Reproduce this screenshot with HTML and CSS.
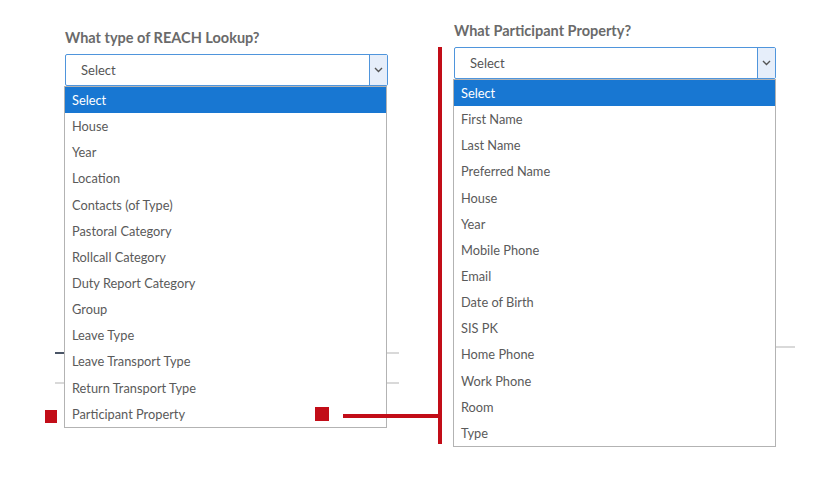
FILE: index.html
```html
<!DOCTYPE html>
<html>
<head>
<meta charset="utf-8">
<link rel="stylesheet" href="styles.css">
</head>
<body>
<div class="page">
  <div class="bg-line dark" style="left:55px;top:352px;width:12px"></div>
  <div class="bg-line light" style="left:55px;top:382px;width:12px"></div>
  <div class="bg-line light" style="left:385px;top:352px;width:14px"></div>
  <div class="bg-line light" style="left:385px;top:382px;width:14px"></div>
  <div class="bg-line light" style="left:772px;top:346px;width:23px"></div>

  <div class="col col-left">
    <div class="label">What type of REACH Lookup?</div>
    <div class="select-wrap">
      <div class="select">
        <span class="select-text">Select</span>
        <span class="select-btn"><svg width="9" height="6" viewBox="0 0 9 6"><polyline points="1,1 4.5,4.5 8,1" fill="none" stroke="#555" stroke-width="1.4"/></svg></span>
      </div>
      <ul class="dropdown">
        <li class="active">Select</li>
        <li>House</li>
        <li>Year</li>
        <li>Location</li>
        <li>Contacts (of Type)</li>
        <li>Pastoral Category</li>
        <li>Rollcall Category</li>
        <li>Duty Report Category</li>
        <li>Group</li>
        <li>Leave Type</li>
        <li>Leave Transport Type</li>
        <li>Return Transport Type</li>
        <li>Participant Property</li>
      </ul>
    </div>
  </div>

  <div class="col col-right">
    <div class="label">What Participant Property?</div>
    <div class="select-wrap">
      <div class="select">
        <span class="select-text">Select</span>
        <span class="select-btn"><svg width="9" height="6" viewBox="0 0 9 6"><polyline points="1,1 4.5,4.5 8,1" fill="none" stroke="#555" stroke-width="1.4"/></svg></span>
      </div>
      <ul class="dropdown">
        <li class="active">Select</li>
        <li>First Name</li>
        <li>Last Name</li>
        <li>Preferred Name</li>
        <li>House</li>
        <li>Year</li>
        <li>Mobile Phone</li>
        <li>Email</li>
        <li>Date of Birth</li>
        <li>SIS PK</li>
        <li>Home Phone</li>
        <li>Work Phone</li>
        <li>Room</li>
        <li>Type</li>
      </ul>
    </div>
  </div>

  <div class="mark sq-left"></div>
  <div class="mark sq-mid"></div>
  <div class="mark h-line"></div>
  <div class="mark v-line"></div>
</div>
</body>
</html>
```
FILE: styles.css
```css
* { box-sizing: border-box; }
html, body { margin: 0; padding: 0; background: #fff; }
body {
  font-family: Lato, "Open Sans", "Liberation Sans", sans-serif;
  width: 818px;
  height: 484px;
  overflow: hidden;
}
.page {
  position: relative;
  width: 818px;
  height: 484px;
  display: flex;
  gap: 66px;
  padding-left: 65px;
  align-items: flex-start;
}
.col {
  width: 323px;
  display: flex;
  flex-direction: column;
  gap: 7px;
}
.col-left { padding-top: 29px; }
.col-right { padding-top: 22px; width: 322px; }
.label {
  font-size: 14.5px;
  line-height: 18px;
  font-weight: 700;
  color: #6a6a6a;
}
.select-wrap { position: relative; }
.select {
  height: 32px;
  border: 1px solid #4f95dc;
  border-radius: 2px;
  background: #fff;
  display: flex;
  align-items: stretch;
}
.select-text {
  flex: 1;
  padding-left: 15px;
  font-size: 13px;
  line-height: 30px;
  color: #555;
}
.select-btn {
  width: 18px;
  background: #e6eefa;
  border-left: 1px solid #4f95dc;
  display: flex;
  align-items: center;
  justify-content: center;
}
.dropdown {
  position: absolute;
  z-index: 2;
  left: -1px;
  top: 32px;
  width: 100%;
  margin: 0;
  padding: 0;
  list-style: none;
  background: #fff;
  border: 1px solid #b3b3b3;
}
.col-right .dropdown { width: calc(100% + 1px); }
.dropdown li {
  height: 26.15px;
  line-height: 26px;
  padding-left: 7px;
  font-size: 12.8px;
  color: #5a5a5a;
  white-space: nowrap;
}
.dropdown li.active {
  background: #1877d2;
  color: #fff;
}
.bg-line {
  position: absolute;
  z-index: 0;
}
.bg-line.dark { background: #4a5566; height: 2px; }
.bg-line.light { background: #d9d9d9; height: 2px; }
.mark {
  position: absolute;
  z-index: 3;
  background: #c20d18;
}
.sq-left { left: 45px; top: 410px; width: 12px; height: 13px; }
.sq-mid { left: 315px; top: 407px; width: 14px; height: 14px; }
.h-line { left: 343px; top: 414px; width: 99px; height: 4px; }
.v-line { left: 438px; top: 47px; width: 4px; height: 397px; }
```
